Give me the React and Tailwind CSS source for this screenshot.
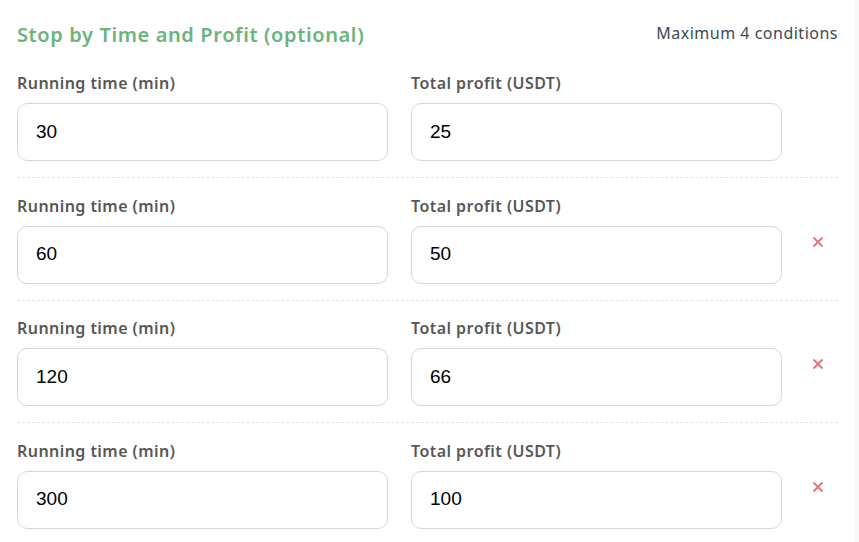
import React from "react";

const rows = [
  { t: "30", p: "25", x: false },
  { t: "60", p: "50", x: true },
  { t: "120", p: "66", x: true },
  { t: "300", p: "100", x: true },
];

function XIcon() {
  return (
    <svg width="12" height="12" viewBox="0 0 12 12" fill="none">
      <path d="M1.5 1.5L10.5 10.5M10.5 1.5L1.5 10.5" stroke="#e5767a" strokeWidth="2" strokeLinecap="butt" />
    </svg>
  );
}

function Field({ label, value }) {
  return (
    <div className="flex flex-col">
      <div className="h-6 leading-6 text-[16px] font-semibold tracking-[0.45px] text-[#575757] mb-2">
        {label}
      </div>
      <div className="h-[58px] rounded-[10px] border border-[#d3d9d9] bg-white flex items-center pl-[18px] text-[19px] text-black font-['Liberation_Sans',Arial,sans-serif]">
        {value}
      </div>
    </div>
  );
}

export default function App() {
  return (
    <div className="w-[859px] h-[542px] flex bg-white overflow-hidden font-['Noto_Sans','Open_Sans',sans-serif]">
      <div className="w-[855px] px-[17px] pt-[21px]">
        <div className="flex items-start justify-between h-7">
          <div className="text-[20px] leading-7 font-semibold tracking-[0.62px] text-[#6bb47e]">Stop by Time and Profit (optional)</div>
          <div className="text-[16px] leading-6 tracking-[0.5px] text-[#3c4858]">Maximum 4 conditions</div>
        </div>
        <div className="mt-[22px]">
          {rows.map((r, i) => (
            <div
              key={i}
              className={
                i === 0
                  ? "grid grid-cols-[371px_371px_1fr] gap-x-[23px] pb-4 border-b border-dashed border-[#e3e6e8]"
                  : i === rows.length - 1
                  ? "grid grid-cols-[371px_371px_1fr] gap-x-[23px] pt-[15.5px] pb-4"
                  : "grid grid-cols-[371px_371px_1fr] gap-x-[23px] pt-[15.5px] pb-4 border-b border-dashed border-[#e3e6e8]"
              }
            >
              <Field label="Running time (min)" value={r.t} />
              <Field label="Total profit (USDT)" value={r.p} />
              <div className="pt-[42px] pl-[7px]">{r.x ? <XIcon /> : null}</div>
            </div>
          ))}
        </div>
      </div>
      <div className="w-[4px] bg-[#f7f8f9]" />
    </div>
  );
}
